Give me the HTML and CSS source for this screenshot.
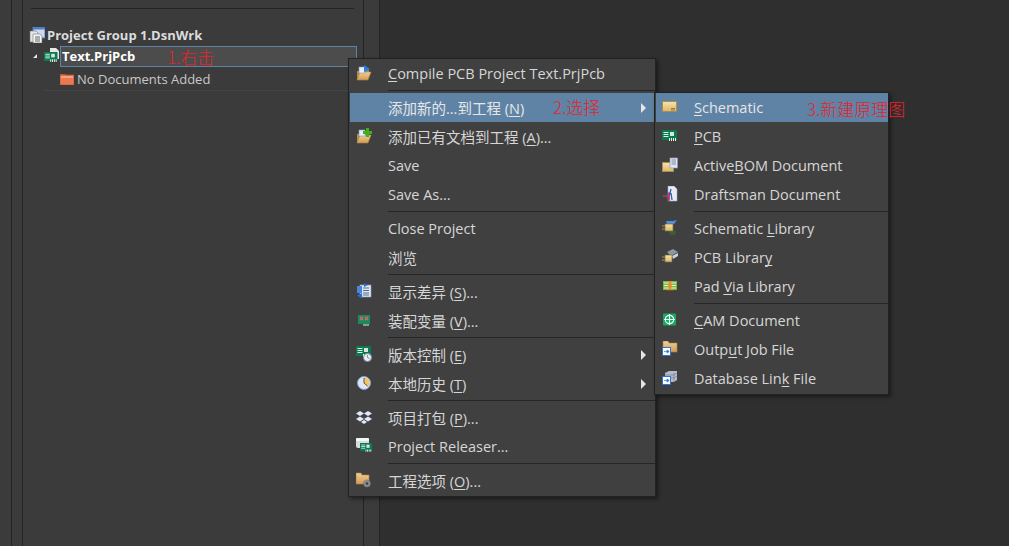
FILE: index.html
```html
<!DOCTYPE html>
<html lang="zh-CN">
<head>
    <meta charset="UTF-8">
    <title>Text.PrjPcb</title>
    <link rel="stylesheet" href="styles.css">
</head>
<body>
<svg class="defs" width="0" height="0">
    <defs>
        <linearGradient id="tan" x1="0" y1="0" x2="0" y2="1"><stop offset="0" stop-color="#f8e4a8"/><stop offset="1" stop-color="#d9b76c"/></linearGradient>
        <linearGradient id="peach" x1="0" y1="0" x2="0" y2="1"><stop offset="0" stop-color="#f3cf95"/><stop offset="1" stop-color="#d39a55"/></linearGradient>
        <g id="board">
            <rect x="0" y="0" width="15" height="10" fill="#0c7a4e"/>
            <rect x="1.5" y="2" width="5" height="1" fill="#dff3e8"/><rect x="1.5" y="4" width="5" height="1" fill="#dff3e8"/><rect x="1.5" y="6" width="5" height="1" fill="#dff3e8"/>
            <rect x="8" y="2" width="4" height="4" fill="#d8e8e0"/>
            <path d="M7 8h1v3H7zM9 8h1v3H9zM11 8h1v3h-1zM13 8h1v3h-1z" fill="#e8f5ee"/>
        </g>
        <g id="openfolder">
            <path d="M1 6h5l1-1h6v2H5L3 15H1z" fill="#b08f4f"/>
            <path d="M4 7h11l-3 8H1z" fill="url(#peach)" stroke="#a98445" stroke-width=".6"/>
            <rect x="3" y="2" width="6" height="6" fill="#e8eef8" stroke="#7f98c0" stroke-width=".6"/>
        </g>
        <g id="bluebox">
            <rect x=".5" y=".5" width="8" height="8" fill="#fff" stroke="#2e74d0"/>
            <path d="M2 4.5h3V3l2.200 1.500L5 6V4.500" fill="#2e74d0" stroke="#2e74d0" stroke-width=".7"/>
        </g>
    </defs>
</svg>

<div class="workspace">
    <div class="strip strip-a"></div>
    <div class="strip strip-b"></div>
    <div class="panel">
        <div class="panel-rule"></div>
        <div class="tree">
            <div class="tree-row group-row">
                <svg class="icon" viewBox="0 0 16 16"><rect x="4" y="0" width="12" height="11" fill="#cdd9ee" stroke="#4f7fc4"/><rect x="4" y="0" width="12" height="2.500" fill="#4f7fc4"/><path d="M1 4h6l2 2v9H1z" fill="#e6e6e6" stroke="#777" stroke-width=".6"/><path d="M4 7h7l2 2v7H4z" fill="#f3f3f3" stroke="#777" stroke-width=".6"/><path d="M6 10h5M6 12h5M6 14h5" stroke="#666"/></svg>
                <span>Project Group 1.DsnWrk</span>
            </div>
            <div class="tree-row project-row">
                <span class="twisty"></span>
                <svg class="icon" viewBox="0 0 16 16"><path d="M6 0h6l3 3v8H6z" fill="#e8e8e8"/><use href="#board" transform="translate(0 4) scale(.9)"/></svg>
                <span class="project-name">Text.PrjPcb</span>
            </div>
            <div class="tree-row docs-row">
                <svg class="folder" viewBox="0 0 14 12"><path d="M0 2V1h5l1 1z" fill="#c9583a"/><rect x="0" y="2" width="14" height="10" fill="#e9794f" stroke="#c4553a" stroke-width=".8"/><rect x="1" y="3" width="12" height="2" fill="#f4a27f"/></svg>
                <span>No Documents Added</span>
            </div>
        </div>
    </div>
    <div class="strip strip-c"></div>
    <div class="main"></div>
</div>

<span class="note note-1">1.右击</span>

<div class="menu main-menu">
    <div class="item"><svg class="icon" viewBox="0 0 16 16"><use href="#openfolder"/><path d="M8 0l6 4-6 3z" fill="#2c7be5"/></svg><span class="label"><u>C</u>ompile PCB Project Text.PrjPcb</span></div>
    <div class="sep"></div>
    <div class="item active"><span class="label">添加新的...到工程 (<u>N</u>)</span><span class="arrow"></span></div>
    <div class="item"><svg class="icon" viewBox="0 0 16 16"><use href="#openfolder"/><path d="M10 0h3v3h3v3h-3v3h-3V6H7V3h3z" fill="#3fae1f"/></svg><span class="label">添加已有文档到工程 (<u>A</u>)...</span></div>
    <div class="item"><span class="label">Save</span></div>
    <div class="item"><span class="label">Save As...</span></div>
    <div class="sep"></div>
    <div class="item"><span class="label">Close Project</span></div>
    <div class="item"><span class="label">浏览</span></div>
    <div class="sep"></div>
    <div class="item"><svg class="icon" viewBox="0 0 16 16"><rect x="4" y="2" width="11" height="12" fill="#dfe6f2" stroke="#8aa0c0" stroke-width=".6"/><path d="M7 5h6M7 7.500h6M7 10h6M7 12h6" stroke="#54708f"/><path d="M8 0l4 2-4 2zM6 10l-5 2.500L6 15z" fill="#1f6fe0"/><rect x="1" y="3" width="5" height="7" fill="#4b86d8"/></svg><span class="label">显示差异 (<u>S</u>)...</span></div>
    <div class="item"><svg class="icon" viewBox="0 0 16 16"><rect x="2" y="3" width="12" height="9" fill="#1d8a5c"/><path d="M4 5l3 3M7 5L4 8M9 5l3 3M12 5L9 8" stroke="#e8666a" stroke-width="1.200"/><path d="M8 12v2M10 12v2M12 12v2" stroke="#dff3e8"/></svg><span class="label">装配变量 (<u>V</u>)...</span></div>
    <div class="sep"></div>
    <div class="item"><svg class="icon" viewBox="0 0 16 16"><use href="#board"/><circle cx="11.500" cy="11.500" r="4" fill="#e9eef6" stroke="#6c8fc0"/><path d="M11.500 9v2.500l2 1" stroke="#b8862f" fill="none"/></svg><span class="label">版本控制 (<u>E</u>)</span><span class="arrow"></span></div>
    <div class="item"><svg class="icon" viewBox="0 0 16 16"><circle cx="8" cy="8" r="6.500" fill="#dfe7f4" stroke="#7fa0d4"/><path d="M8 8V2.500A5.500 5.500 0 0 1 12 12z" fill="#f3c566"/><path d="M8 3v5l3.500 3" stroke="#555" fill="none"/></svg><span class="label">本地历史 (<u>T</u>)</span><span class="arrow"></span></div>
    <div class="sep"></div>
    <div class="item"><svg class="icon" viewBox="0 0 16 16"><path d="M4 2l4 2.500L4 7 0 4.500zM12 2l4 2.500L12 7 8 4.500zM4 7.500L8 10l-4 2.500L0 10zM12 7.500l4 2.500-4 2.500L8 10zM8 11l3 2-3 2-3-2z" fill="#dfe9fb"/></svg><span class="label">项目打包 (<u>P</u>)...</span></div>
    <div class="item"><svg class="icon" viewBox="0 0 16 16"><rect x="0" y="0" width="13" height="10" rx="2" fill="#d8dde2"/><rect x="0" y="0" width="13" height="3" rx="1" fill="#f3f5f7"/><use href="#board" transform="translate(4 5) scale(.8)"/></svg><span class="label">Project Releaser...</span></div>
    <div class="sep"></div>
    <div class="item"><svg class="icon" viewBox="0 0 16 16"><path d="M0 1h5l1 2h7v9H0z" fill="url(#peach)" stroke="#a98445" stroke-width=".6"/><circle cx="11" cy="11.500" r="3.500" fill="#8d8d8d" stroke="#6a6a6a" stroke-dasharray="1.500 1"/><circle cx="11" cy="11.500" r="1.300" fill="#3d3d3d"/></svg><span class="label">工程选项 (<u>O</u>)...</span></div>
</div>

<div class="menu sub-menu">
    <div class="item active"><svg class="icon" viewBox="0 0 16 16"><rect x=".5" y="2.500" width="14" height="10" fill="url(#tan)" stroke="#a98d52"/><path d="M9 9.500h4M9 11h4" stroke="#8f7a4a"/></svg><span class="label"><u>S</u>chematic</span></div>
    <div class="item"><svg class="icon" viewBox="0 0 16 16"><use href="#board" transform="translate(0 2)"/></svg><span class="label"><u>P</u>CB</span></div>
    <div class="item"><svg class="icon" viewBox="0 0 16 16"><rect x=".5" y="5.500" width="11" height="9" fill="url(#tan)" stroke="#a98d52"/><rect x="8" y="1" width="7.500" height="10" fill="#dfe5f0" stroke="#8f9db8" stroke-width=".7"/><path d="M9.500 3h4.500M9.500 5h4.500M9.500 7h4.500" stroke="#7a8aa8"/></svg><span class="label">Active<u>B</u>OM Document</span></div>
    <div class="item"><svg class="icon" viewBox="0 0 16 16"><path d="M6 0h6l3 3v12H6z" fill="#e8ebf2" stroke="#9aa4b8" stroke-width=".6"/><path d="M1 11l8-4M9 3l-3 12M9 7l1 7" stroke="#2a5fc0" stroke-width="1.300"/><path d="M1 9l7 4M7 6v9" stroke="#d8262c" stroke-width="1.100"/></svg><span class="label">Draftsman Document</span></div>
    <div class="sep"></div>
    <div class="item"><svg class="icon" viewBox="0 0 16 16"><path d="M4 1h7l4-1-3 4H5z" fill="#4b90e0"/><path d="M7 12h7M8 14h5" stroke="#3f7a2a"/><path d="M0 6h3M0 9h3" stroke="#b08f4f"/><rect x="3" y="4" width="8" height="7" fill="url(#tan)" stroke="#7d6a3a" stroke-width=".7"/></svg><span class="label">Schematic <u>L</u>ibrary</span></div>
    <div class="item"><svg class="icon" viewBox="0 0 16 16"><path d="M5 3l6-3 5 3-7 4z" fill="#8b97a5"/><path d="M10 7l6-3v3l-5 3z" fill="#c5d5dc"/><path d="M0 8h3M0 11h3" stroke="#b08f4f"/><rect x="3" y="6" width="7" height="7" fill="url(#tan)" stroke="#7d6a3a" stroke-width=".7"/></svg><span class="label">PCB Librar<u>y</u></span></div>
    <div class="item"><svg class="icon" viewBox="0 0 16 16"><rect x="1" y="3" width="14" height="9" fill="#79b83a"/><path d="M2 5h12M2 7.500h12M2 10h12" stroke="#e9f5d9"/><path d="M6 3h4l-1 3 1 2-1 3H7L6 8l1-2z" fill="#ec8a2f"/><rect x="4" y="12" width="8" height="1" fill="#b03020"/></svg><span class="label">Pad <u>V</u>ia Library</span></div>
    <div class="sep"></div>
    <div class="item"><svg class="icon" viewBox="0 0 16 16"><rect x="1" y="1.500" width="13" height="12" rx="1" fill="#16a864"/><circle cx="7.500" cy="7.500" r="4.200" fill="none" stroke="#e8fff3" stroke-width="1.200"/><path d="M7.500 2v11M2 7.500h11" stroke="#e8fff3" stroke-width="1.200"/></svg><span class="label"><u>C</u>AM Document</span></div>
    <div class="item"><svg class="icon" viewBox="0 0 16 16"><path d="M1 0h5l1 2h8v9H1z" fill="url(#peach)" stroke="#a98445" stroke-width=".6"/><use href="#bluebox" transform="translate(0 6)"/></svg><span class="label">Outp<u>u</u>t Job File</span></div>
    <div class="item"><svg class="icon" viewBox="0 0 16 16"><path d="M3 3l4-2h8v9l-3 2H3z" fill="#b4bcc8"/><path d="M3 5h9l3-2M3 8h9l3-2M12 3v9" stroke="#78818e" fill="none" stroke-width=".7"/><use href="#bluebox" transform="translate(0 6)"/></svg><span class="label">Database Lin<u>k</u> File</span></div>
</div>

<span class="note note-2">2.选择</span>
<span class="note note-3">3.新建原理图</span>
</body>
</html>
```

FILE: styles.css
```css
html, body { margin: 0; height: 100%; overflow: hidden; }
body { font-family: "Open Sans", "Noto Sans CJK SC", sans-serif; font-size: 14.5px; color: #d6d6d6; background: #2f2f2f; }
.defs { position: absolute; }
u { text-decoration-skip-ink: none; text-underline-offset: 2px; }

.workspace { display: flex; height: 546px; }
.strip { box-sizing: border-box; border-right: 1px solid #242424; background: #3b3b3b; }
.strip-a { width: 12px; }
.strip-b { width: 11px; }
.strip-c { width: 16px; }
.panel { box-sizing: border-box; width: 341px; padding: 8px 6px 0 6px; background: #3b3b3b; border-right: 1px solid #242424; }
.panel-rule { height: 1px; margin: 0 3px 0 2px; background: #242424; }
.main { flex: 1; background: #2f2f2f; }

.tree { margin-top: 15px; display: flex; flex-direction: column; }
.tree-row { display: flex; align-items: center; }
.group-row { height: 21px; font-size: 13px; font-weight: 700; gap: 2px; color: #dcdcdc; }
.project-row { height: 22px; font-size: 13px; font-weight: 700; color: #fff; }
.docs-row { height: 23px; padding-left: 31px; gap: 3px; font-size: 13px; color: #c8c8c8; border-bottom: 1px solid #444; margin-left: 15px; padding-left: 16px; margin-right: 7px; }
.icon { width: 16px; height: 16px; flex: none; }
.folder { width: 14px; height: 12px; flex: none; }
.twisty { width: 0; height: 0; margin: 0 7px 0 4px; border-left: 4px solid transparent; border-bottom: 4px solid #e6e6e6; }
.project-name { flex: 1; height: 19px; line-height: 19px; margin-right: 0; padding-left: 1px; border: 1px solid #5f83a5; background: #4c4c4c; }

.menu { position: absolute; box-sizing: border-box; padding: 0 0 1px 1px; background: #404040; border: 1px solid #222; box-shadow: 2px 2px 4px rgba(0, 0, 0, .45); }
.main-menu { left: 348px; top: 58px; width: 308px; }
.sub-menu { left: 654px; top: 92px; width: 235px; }
.item { position: relative; display: flex; align-items: center; height: 29px; padding-left: 6px; }
.item .icon { position: absolute; left: 6px; top: 6px; }
.label { margin-left: 32px; white-space: nowrap; }
.item.active { background: #5f83a5; color: #e6e6e6; }
.sep { height: 1px; margin: 2px 0 2px 38px; background: #262626; }
.arrow { position: absolute; right: 9px; top: 10px; width: 0; height: 0; border-left: 5px solid #e6e6e6; border-top: 5px solid transparent; border-bottom: 5px solid transparent; }

.note { position: absolute; font-family: "Noto Sans CJK SC", sans-serif; font-size: 17px; line-height: 24px; font-weight: 300; color: #e8212b; white-space: nowrap; }
.note-1 { left: 167px; top: 45px; }
.note-2 { left: 553px; top: 95px; }
.note-3 { left: 807px; top: 97px; }
```
